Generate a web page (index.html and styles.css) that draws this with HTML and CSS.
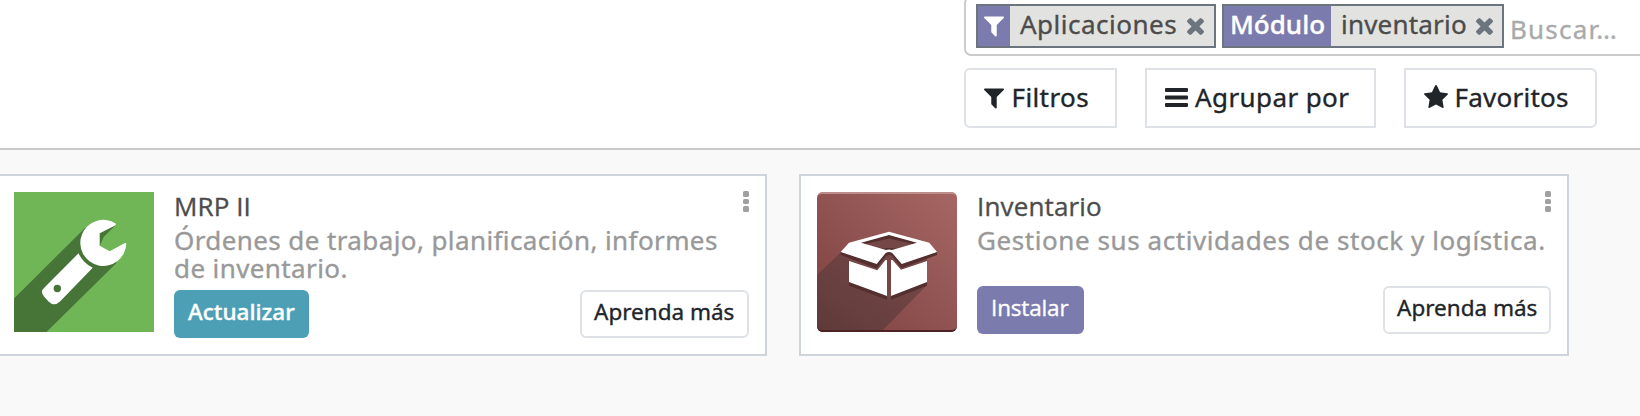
FILE: index.html
```html
<!DOCTYPE html>
<html lang="es">
<head>
<meta charset="utf-8">
<title>Aplicaciones</title>
<link rel="stylesheet" href="styles.css">
</head>
<body>
<svg class="defs" width="0" height="0" aria-hidden="true">
  <symbol id="filter" viewBox="0 0 1408 1408"><path d="M1403 39q17 41-14 70l-493 493v742q0 42-39 59-13 5-25 5-27 0-45-19l-256-256q-19-19-19-45v-486L19 109Q-12 80 5 39 22 0 64 0h1280q42 0 59 39z"/></symbol>
  <symbol id="close" viewBox="0 0 1188 1188"><path d="M1188 956q0 40-28 68l-136 136q-28 28-68 28t-68-28l-294-294-294 294q-28 28-68 28t-68-28l-136-136q-28-28-28-68t28-68l294-294-294-294q-28-28-28-68t28-68l136-136q28-28 68-28t68 28l294 294 294-294q28-28 68-28t68 28l136 136q28 28 28 68t-28 68l-294 294 294 294q28 28 28 68z"/></symbol>
</svg>
<header class="panel">
  <div class="search">
    <div class="facet facet-app">
      <span class="facet-icon"><svg width="20" height="21"><use href="#filter"/></svg></span>
      <span class="facet-value">Aplicaciones</span>
      <svg class="remove" width="17" height="17"><use href="#close"/></svg>
    </div>
    <div class="facet facet-module">
      <span class="facet-label">Módulo</span>
      <span class="facet-value">inventario</span>
      <svg class="remove" width="17" height="17"><use href="#close"/></svg>
    </div>
    <span class="placeholder">Buscar…</span>
  </div>
  <div class="options">
    <button class="option filters"><svg width="20" height="21"><use href="#filter"/></svg><span>Filtros</span></button>
    <button class="option group"><svg width="23" height="19" viewBox="0 0 23 19"><path d="M1 0h21q1 0 1 1v2q0 1-1 1H1Q0 4 0 3V1Q0 0 1 0zM1 7.5h21q1 0 1 1v2q0 1-1 1H1q-1 0-1-1v-2q0-1 1-1zM1 15h21q1 0 1 1v2q0 1-1 1H1q-1 0-1-1v-2q0-1 1-1z"/></svg><span>Agrupar por</span></button>
    <button class="option favorites"><svg width="24" height="23" viewBox="0 0 24 23"><path d="M12 0q.7 0 1 .7l3.100 6.500 7 1q.9.1.9.700 0 .4-.5.900l-5.100 5 1.200 7.100q.1 1.100-.7 1.100-.3 0-.7-.2L12 19.400l-6.200 3.400q-.4.2-.7.200-.8 0-.7-1.100l1.200-7.100-5.100-5Q0 9.300 0 8.900q0-.6.9-.7l7-1L11 .7Q11.300 0 12 0z"/></svg><span>Favoritos</span></button>
  </div>
</header>
<main class="apps">
  <article class="card card-mrp">
    <svg class="app-icon" width="140" height="140" viewBox="0 0 140 140">
      <path fill="#70b657" d="M0 0h140v140H0z"/>
      <path fill="#477538" d="M0 106.500 71 36l15 5 15.700-8-12 12-4 9 17 16.700L32.500 140H0z"/>
      <path fill="#fff" d="M101.700 31.500A23 23 0 1 0 112.300 51.500Q112 50.500 110.500 51.300L95.700 59.300 85.700 53.700V41.300L101 33.500Q102.300 32.500 101.700 31.500z"/>
      <path fill="#fff" d="M64.500 61.300Q69 71 78.700 75.700L46 109.500Q40 115 34.500 109.500L30 104.500Q25.500 99.500 31 95z"/>
      <circle cx="43.300" cy="96.500" r="3.700" fill="#477538"/>
    </svg>
    <div class="body">
      <h2 class="title title-mrp">MRP II</h2>
      <p class="desc">Órdenes de trabajo, planificación, informes<br>de inventario.</p>
      <div class="actions"><button class="btn update">Actualizar</button><button class="btn learn">Aprenda más</button></div>
    </div>
    <span class="kebab"><i></i><i></i><i></i></span>
  </article>
  <article class="card card-stock">
    <svg class="app-icon" width="140" height="140" viewBox="0 0 140 140">
      <defs>
        <linearGradient id="red" x1="0" y1="1" x2="1" y2="0"><stop offset="0" stop-color="#7c403f"/><stop offset="1" stop-color="#a66764"/></linearGradient>
        <linearGradient id="shade" x1="0" y1="1" x2="1" y2="0"><stop offset="0" stop-color="#5e3a39"/><stop offset="1" stop-color="#794a49"/></linearGradient>
        <clipPath id="tile"><rect width="140" height="140" rx="6"/></clipPath>
      </defs>
      <g clip-path="url(#tile)">
        <path fill="url(#red)" d="M0 0h140v140H0z"/>
        <path fill="url(#shade)" d="M24 60 0 83v57h64l46-47V66z"/>
        <path fill="#bd8d8b" d="M0 0h140v5q-1-3-5-3H5Q1 2 0 5z"/>
        <path fill="#4c2223" d="M0 134q1 4 5 4h130q4 0 5-4v6H0z"/>
        <path fill="#754746" d="M44 50.700 72 43l28 7.700-28 8.300zM32 65h78v28l-38 13-38-13z"/>
        <path fill="#532f2f" d="m44 50.700 28-7.700 28 7.700-4 1.300-24-5.500L48 52zM23.700 60v3l36 13.500L69 64l3-1 3 1 9.700 12L120 63v-3L72 56zM32 90v3.700l38 14V103zM110 90v3.700l-36 14V103z"/>
        <path fill="#fff" fill-rule="evenodd" d="M72 39.700 112.300 50.700 120 60 84.700 72 75.300 61Q72 59 68.700 61L59.700 72 23.700 60 32 50.700zM72 43 44 50.700 69 58Q72 57 75 58L100 50.700z"/>
        <path fill="#fff" d="M32 69l28.300 9.300L68.500 68H70v36L32 90zM110 69 84 77.800 75.500 68H74v36l36-14z"/>
      </g>
    </svg>
    <div class="body">
      <h2 class="title">Inventario</h2>
      <p class="desc desc-stock">Gestione sus actividades de stock y logística.</p>
      <div class="actions"><button class="btn install">Instalar</button><button class="btn learn">Aprenda más</button></div>
    </div>
    <span class="kebab"><i></i><i></i><i></i></span>
  </article>
</main>
</body>
</html>
```
FILE: styles.css
```css
* { box-sizing: border-box; }
body {
  margin: 0;
  width: 1640px;
  height: 416px;
  overflow: hidden;
  background: #f9f9f9;
  color: #4c4c4c;
  font: 26px "Noto Sans", "Open Sans", sans-serif;
  letter-spacing: .4px;
  -webkit-text-stroke: .35px currentColor;
}
svg { display: block; flex: none; fill: currentColor; -webkit-text-stroke: 0; }
.defs { position: absolute; }
button { font: inherit; letter-spacing: inherit; margin: 0; }
.panel {
  height: 150px;
  padding-left: 964px;
  background: #fff;
  border-bottom: 2px solid #c9c9c9;
  overflow: hidden;
}
.search {
  display: flex;
  width: 720px;
  height: 60px;
  margin-top: -4px;
  padding: 6px 0 0 10px;
  border: 2px solid #ccc;
  border-radius: 7px;
  white-space: nowrap;
}
.facet {
  display: flex;
  height: 44px;
  margin-right: 6px;
  border: 2px solid #6c757d;
  background: #e2e2e0;
  line-height: 37px;
}
.facet-app { width: 240px; }
.facet-module { width: 282px; }
.facet-icon {
  width: 32px;
  padding: 10px 0 0 6px;
  background: #7c7bad;
  color: #fff;
}
.facet-value { padding-left: 10px; letter-spacing: .5px; flex: 1; }
.facet-label {
  width: 107px;
  padding-left: 6px;
  background: #7c7bad;
  color: #fff;
  font-weight: 500;
  letter-spacing: 0;
}
.facet-module .facet-value { padding-left: 10px; letter-spacing: .2px; }
.remove { margin: 12px 10px 0 0; color: #6c757d; }
.facet-module .remove { margin-right: 9px; }
.placeholder { color: #aaa; line-height: 51px; letter-spacing: 1.2px; }
.options { display: flex; gap: 28px; margin-top: 12px; }
.option {
  display: flex;
  align-items: flex-start;
  height: 60px;
  padding: 0 0 0 18px;
  background: #fff;
  border: 2px solid #dee2e6;
  color: #212529;
  line-height: 54px;
  white-space: nowrap;
}
.option svg { margin-top: 18px; }
.filters { width: 153px; border-radius: 6px 0 0 6px; }
.filters span { margin-left: 7.500px; }
.group { width: 231px; }
.group span { margin-left: 7px; }
.favorites { width: 193px; border-radius: 0 6px 6px 0; }
.favorites svg { margin-top: 15px; }
.favorites span { margin-left: 6.500px; letter-spacing: .25px; }
.apps { display: flex; gap: 32px; padding-top: 24px; margin-left: -4px; }
.card {
  position: relative;
  display: flex;
  height: 182px;
  padding: 16px;
  background: #fff;
  border: 2px solid #ced4da;
}
.card-mrp { width: 771px; }
.card-stock { width: 770px; }
.body { flex: 1; margin-left: 20px; min-width: 0; }
.title {
  margin: -2px 0 0;
  font: 400 26px/32px "Open Sans", "Noto Sans", sans-serif;
  letter-spacing: .15px;
}
.title-mrp { letter-spacing: .1px; }
.desc { height: 60px; margin: 4px 0 0; color: #999; line-height: 28px; white-space: nowrap; }
.card-mrp .desc { height: 64px; }
.desc-stock { letter-spacing: .57px; }
.actions { display: flex; justify-content: space-between; }
.btn {
  height: 48px;
  padding: 0 0 5px 12px;
  border: 2px solid transparent;
  border-radius: 6px;
  color: #fff;
  font-size: 22.5px;
  font-weight: 500;
  line-height: 39px;
  letter-spacing: 0;
  text-align: left;
  white-space: nowrap;
}
.update { width: 135px; background: #4c9fb5; }
.install { width: 107px; background: #7c7bad; font-family: "Open Sans", "Noto Sans", sans-serif; letter-spacing: -.15px; }
.learn { width: 169px; background: #fff; border-color: #dee2e6; color: #212529; font-weight: 400; }
.card-stock .learn { width: 168px; }
.kebab {
  position: absolute;
  top: 15px;
  right: 16px;
  display: grid;
  gap: 2px;
}
.kebab i { width: 6px; height: 5.500px; border-radius: 1.500px; background: #a0a0a0; }
```
